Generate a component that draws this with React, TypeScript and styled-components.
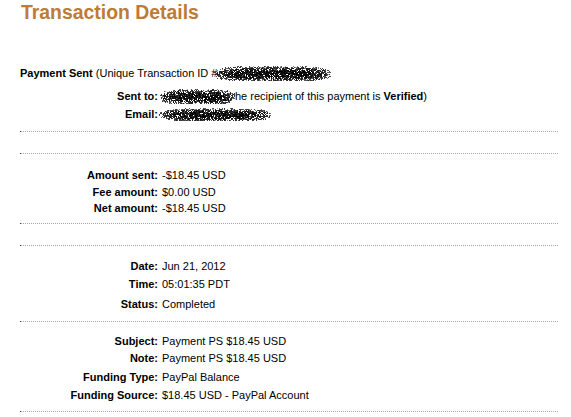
import React, { useMemo } from 'react';
import styled, { createGlobalStyle } from 'styled-components';

const Global = createGlobalStyle`
  html, body { margin: 0; padding: 0; background: #fff; }
  body {
    font-family: "Liberation Sans", Arial, sans-serif;
    font-size: 11px;
    color: #000;
  }
`;

const Page = styled.div`
  width: 538px;
  padding: 0 13px 0 20px;
`;

const Title = styled.h1`
  margin: 0;
  padding-left: 1px;
  height: 24px;
  font-size: 19.4px;
  line-height: 24px;
  font-weight: bold;
  color: #bd7b36;
`;

const HeadRow = styled.div<{ $mt: number }>`
  display: flex;
  align-items: center;
  height: 16px;
  margin-top: ${p => p.$mt}px;
  white-space: nowrap;
`;

const Row = styled.div<{ $mt: number }>`
  display: grid;
  grid-template-columns: 138px 1fr;
  column-gap: 4px;
  align-items: center;
  height: 16px;
  margin-top: ${p => p.$mt}px;
  white-space: nowrap;
`;

const Label = styled.div`
  text-align: right;
  font-weight: bold;
`;

const Value = styled.div`
  display: flex;
  align-items: center;
`;

const B = styled.b`
  font-weight: bold;
`;

const Divider = styled.div<{ $mt: number }>`
  position: relative;
  height: 0;
  border-top: 1px dotted #a6a6a6;
  margin-top: ${p => p.$mt}px;
  &::before {
    content: '';
    position: absolute;
    left: 0;
    top: -1px;
    width: 1px;
    height: 1px;
    background: #444;
  }
`;

const BlobSvg = styled.svg<{ $ml: number }>`
  display: block;
  flex: none;
  margin-left: ${p => p.$ml}px;
`;

const shades = ['#000', '#111', '#262626', '#3c3c3c', '#5a5a5a', '#808080', '#a8a8a8', '#cfcfcf'];

function Redacted({ w, h, seed, ml = 0 }: { w: number; h: number; seed: number; ml?: number }) {
  const rects = useMemo(() => {
    let s = seed;
    const rnd = () => {
      s = (s * 1103515245 + 12345) & 0x7fffffff;
      return s / 0x7fffffff;
    };
    const out: { x: number; y: number; c: string }[] = [];
    for (let y = 0; y < h; y++) {
      for (let x = 0; x < w; x++) {
        const dx = (x - w / 2) / (w / 2);
        const dy = (y - h / 2) / (h / 2);
        const d = Math.pow(Math.abs(dx), 5) + Math.pow(Math.abs(dy), 2.2) + (rnd() - 0.5) * 0.25;
        const p = d < 1 ? 0.95 - 0.45 * d : 0;
        if (rnd() < p) {
          const ci = Math.min(shades.length - 1, Math.floor(rnd() * rnd() * 5 + d * 3.2));
          out.push({ x, y, c: shades[ci] });
        }
      }
    }
    return out;
  }, [w, h, seed]);
  return (
    <BlobSvg $ml={ml} width={w} height={h} viewBox={`0 0 ${w} ${h}`} shapeRendering="crispEdges">
      {rects.map((r, i) => (
        <rect key={i} x={r.x} y={r.y} width={1} height={1} fill={r.c} />
      ))}
    </BlobSvg>
  );
}

type Item = { label: string; value: string; mt: number };

const amounts: Item[] = [
  { label: 'Amount sent:', value: '-$18.45 USD', mt: 13 },
  { label: 'Fee amount:', value: '$0.00 USD', mt: 1 },
  { label: 'Net amount:', value: '-$18.45 USD', mt: 0 },
];

const dates: Item[] = [
  { label: 'Date:', value: 'Jun 21, 2012', mt: 12 },
  { label: 'Time:', value: '05:01:35 PDT', mt: 2 },
  { label: 'Status:', value: 'Completed', mt: 4 },
];

const funding: Item[] = [
  { label: 'Subject:', value: 'Payment PS $18.45 USD', mt: 11 },
  { label: 'Note:', value: 'Payment PS $18.45 USD', mt: 1 },
  { label: 'Funding Type:', value: 'PayPal Balance', mt: 3 },
  { label: 'Funding Source:', value: '$18.45 USD - PayPal Account', mt: 2 },
];

function Section({ items }: { items: Item[] }) {
  return (
    <>
      {items.map(it => (
        <Row key={it.label} $mt={it.mt}>
          <Label>{it.label}</Label>
          <Value>{it.value}</Value>
        </Row>
      ))}
    </>
  );
}

export default function App() {
  return (
    <>
      <Global />
      <Page>
        <Title>Transaction Details</Title>
        <HeadRow $mt={41}>
          <B>Payment Sent</B>&nbsp;(Unique Transaction ID #
          <Redacted w={118} h={15} seed={17} ml={-4} />
        </HeadRow>
        <Row $mt={7}>
          <Label>Sent to:</Label>
          <Value>
            <Redacted w={76} h={15} seed={91} ml={-3} />
            he recipient of this payment is&nbsp;<B>Verified</B>)
          </Value>
        </Row>
        <Row $mt={2}>
          <Label>Email:</Label>
          <Value>
            <Redacted w={112} h={13} seed={233} ml={-3} />
          </Value>
        </Row>
        <Divider $mt={9} />
        <Divider $mt={21} />
        <Section items={amounts} />
        <Divider $mt={7} />
        <Divider $mt={21} />
        <Section items={dates} />
        <Divider $mt={9} />
        <Section items={funding} />
        <Divider $mt={8} />
      </Page>
    </>
  );
}
